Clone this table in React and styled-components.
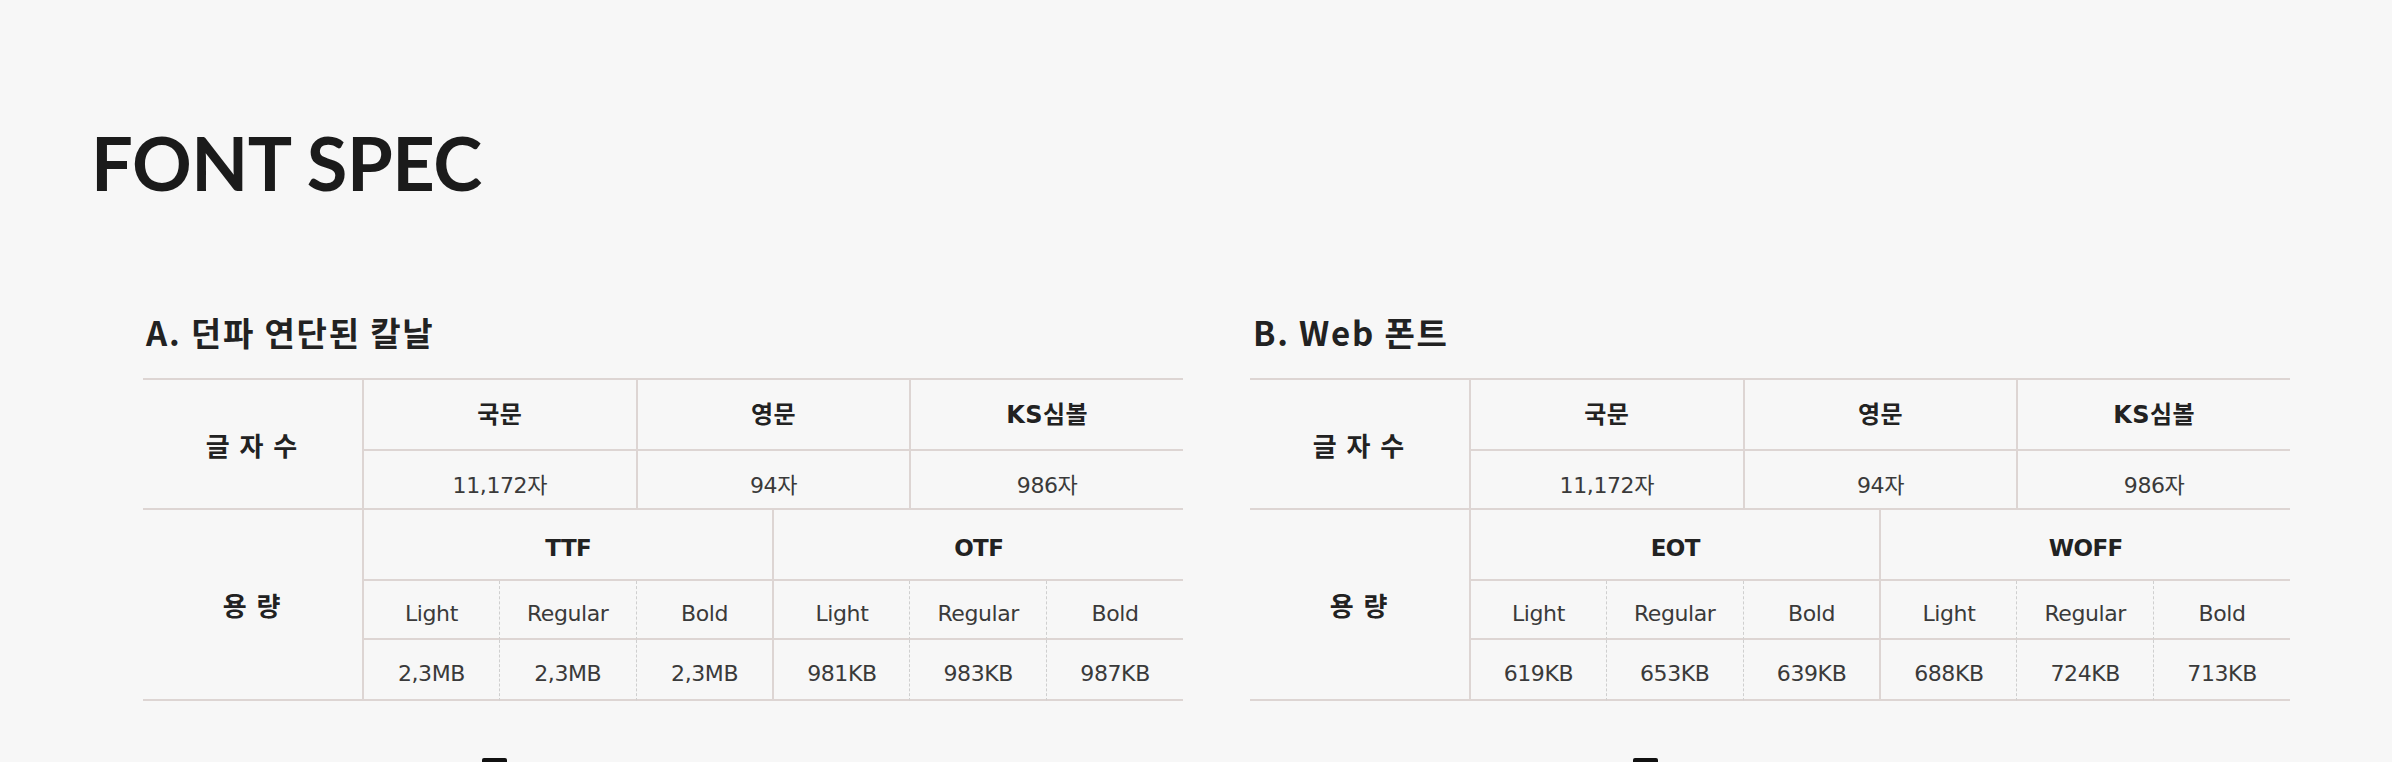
import React from "react";
import styled, { createGlobalStyle, css } from "styled-components";

const Global = createGlobalStyle`
  html, body { margin: 0; padding: 0; background: #f7f7f7; }
  body { font-family: "Lato", "Noto Sans CJK KR", sans-serif; color: #222; }
`;

const Page = styled.div`
  width: 2392px;
  height: 762px;
  overflow: hidden;
  padding-top: 126px;
  box-sizing: border-box;
`;

const Heading = styled.h1`
  margin: 0 0 0 91px;
  font-family: "Lato", sans-serif;
  font-size: 74px;
  line-height: 1;
  font-weight: 700;
  color: #1b1b1b;
  letter-spacing: -0.5px;
`;

const Sections = styled.div`
  display: flex;
  gap: 67px;
  padding-left: 143px;
  margin-top: 116px;
`;

const Section = styled.section`
  width: 1040px;
`;

const Title = styled.h2`
  margin: 0 0 30px 3px;
  font-family: "Noto Sans CJK KR", sans-serif;
  font-size: 33px;
  line-height: 32px;
  font-weight: 700;
  color: #222;
  letter-spacing: 1.8px;
`;

const lineColor = "#ddd5d3";

const Grid = styled.div`
  display: grid;
  grid-template-columns: 219px repeat(6, 1fr);
  grid-template-rows: 71px 59px 71px 59px 61px;
  border-top: 2px solid ${lineColor};
`;

const Cell = styled.div`
  box-sizing: border-box;
  display: flex;
  align-items: center;
  justify-content: center;
  padding-top: 7px;
  border-bottom: 2px solid ${lineColor};
  grid-column: ${(p) => p.$col};
  grid-row: ${(p) => p.$row || "auto"};
  font-family: "DejaVu Sans", "Noto Sans CJK KR", sans-serif;
  font-size: 22px;
  color: #3a3a3a;
  font-weight: 400;
  letter-spacing: -0.4px;
  ${(p) =>
    p.$left === "solid" &&
    css`
      border-left: 2px solid ${lineColor};
    `}
  ${(p) =>
    p.$left === "dashed" &&
    css`
      border-left: 1px dashed #cfcfcf;
    `}
  ${(p) =>
    p.$head &&
    css`
      font-weight: 700;
      font-size: ${p.$head}px;
      color: #222;
      letter-spacing: -0.6px;
    `}
  ${(p) =>
    p.$raise &&
    css`
      padding-top: 0;
      padding-bottom: 4px;
      letter-spacing: 0.4px;
    `}
`;

const Label = styled(Cell)`
  font-family: "Noto Sans CJK KR", sans-serif;
  font-size: 26px;
  font-weight: 700;
  color: #222;
  letter-spacing: 2px;
  padding-top: 0;
`;

const NextRow = styled.div`
  display: flex;
  gap: 67px;
  padding-left: 143px;
  margin-top: 57px;
`;

const NextSlot = styled.div`
  width: 1040px;
  padding-left: ${(p) => p.$offset}px;
  box-sizing: border-box;
`;

const NextMark = styled.div`
  width: 25px;
  height: 10px;
  background: #111;
  border-radius: 2px 2px 0 0;
`;

const top3 = ["국문", "영문", "KS심볼"];
const counts = ["11,172자", "94자", "986자"];
const weights = ["Light", "Regular", "Bold", "Light", "Regular", "Bold"];

function SpecTable({ groups, sizes }) {
  return (
    <Grid>
      <Label $col="1" $row="1 / 3">글 자 수</Label>
      {top3.map((t, i) => (
        <Cell key={t} $head={24} $raise $col={`${2 + i * 2} / span 2`} $row="1" $left="solid">
          {t}
        </Cell>
      ))}
      {counts.map((t, i) => (
        <Cell key={t} $col={`${2 + i * 2} / span 2`} $row="2" $left="solid">
          {t}
        </Cell>
      ))}
      <Label $col="1" $row="3 / 6">용 량</Label>
      {groups.map((g, i) => (
        <Cell key={g} $head={23} $col={`${2 + i * 3} / span 3`} $row="3" $left="solid">
          {g}
        </Cell>
      ))}
      {weights.map((w, i) => (
        <Cell key={"w" + i} $col={`${2 + i}`} $row="4" $left={i % 3 === 0 ? "solid" : "dashed"}>
          {w}
        </Cell>
      ))}
      {sizes.map((s, i) => (
        <Cell key={"s" + i} $col={`${2 + i}`} $row="5" $left={i % 3 === 0 ? "solid" : "dashed"}>
          {s}
        </Cell>
      ))}
    </Grid>
  );
}

export default function App() {
  return (
    <>
      <Global />
      <Page>
        <Heading>FONT SPEC</Heading>
        <Sections>
          <Section>
            <Title>A. 던파 연단된 칼날</Title>
            <SpecTable
              groups={["TTF", "OTF"]}
              sizes={["2,3MB", "2,3MB", "2,3MB", "981KB", "983KB", "987KB"]}
            />
          </Section>
          <Section>
            <Title>B. Web 폰트</Title>
            <SpecTable
              groups={["EOT", "WOFF"]}
              sizes={["619KB", "653KB", "639KB", "688KB", "724KB", "713KB"]}
            />
          </Section>
        </Sections>
        <NextRow>
          <NextSlot $offset={339}>
            <NextMark />
          </NextSlot>
          <NextSlot $offset={383}>
            <NextMark />
          </NextSlot>
        </NextRow>
      </Page>
    </>
  );
}
